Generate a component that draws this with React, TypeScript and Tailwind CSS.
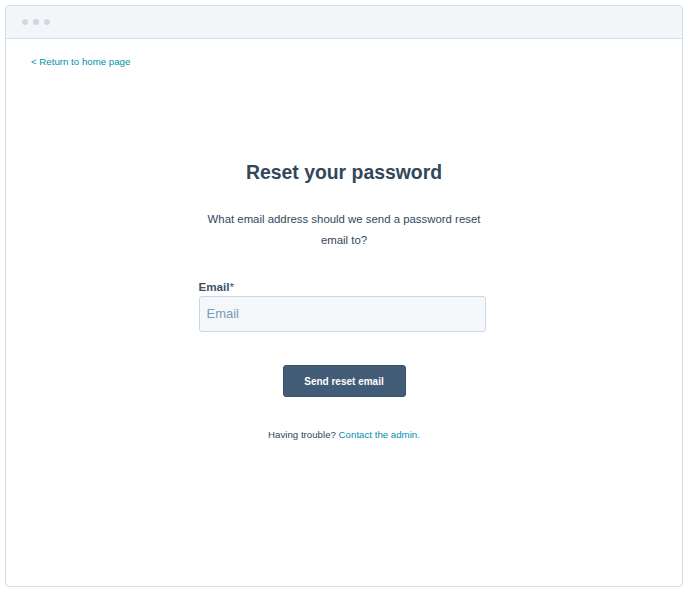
export default function App() {
  return (
    <div className="w-[688px] h-[596px] bg-white p-[5px] font-['Liberation_Sans',Arial,sans-serif]">
      <div className="h-[582px] rounded-[4px] border border-[#d5dee8] flex flex-col overflow-hidden">
        {/* window bar */}
        <div className="h-[33px] shrink-0 bg-[#f3f6f9] border-b border-[#d5dee8] flex items-center gap-[5px] pl-[16px]">
          <span className="w-[6px] h-[6px] rounded-full bg-[#cfd7e1]" />
          <span className="w-[6px] h-[6px] rounded-full bg-[#cfd7e1]" />
          <span className="w-[6px] h-[6px] rounded-full bg-[#cfd7e1]" />
        </div>

        <div className="flex-1 flex flex-col">
          <div className="pl-[25px] pt-[9px]">
            <a className="text-[9.7px] text-[#0091ae] leading-[14px]">&lt; Return to home page</a>
          </div>

          <div className="flex flex-col items-center pt-[88px]">
            <h1 className="text-[19.4px] font-bold text-[#33475b] leading-[24px]">Reset your password</h1>
            <p className="mt-[25px] w-[290px] text-center text-[11.4px] leading-[21px] text-[#33475b]">
              What email address should we send a password reset email to?
            </p>

            <div className="mt-[29px] mr-[4px] w-[287px]">
              <label className="block text-[11.6px] font-bold text-[#3d5169] leading-[14px]">
                Email<span className="font-normal">*</span>
              </label>
              <div className="mt-[2px] h-[36px] rounded-[3px] border border-[#cbd6e2] bg-[#f5f8fa] flex items-center px-[7px]">
                <span className="text-[13px] text-[#7c98b6]">Email</span>
              </div>
            </div>

            <button className="mt-[33px] w-[123px] h-[32px] rounded-[3px] bg-[#425b76] border border-[#3a516a] text-white text-[10px] font-bold">
              Send reset email
            </button>

            <p className="mt-[31px] text-[9.7px] text-[#33475b] leading-[14px]">
              Having trouble? <span className="text-[#0091ae]">Contact the admin.</span>
            </p>
          </div>
        </div>
      </div>
    </div>
  )
}
